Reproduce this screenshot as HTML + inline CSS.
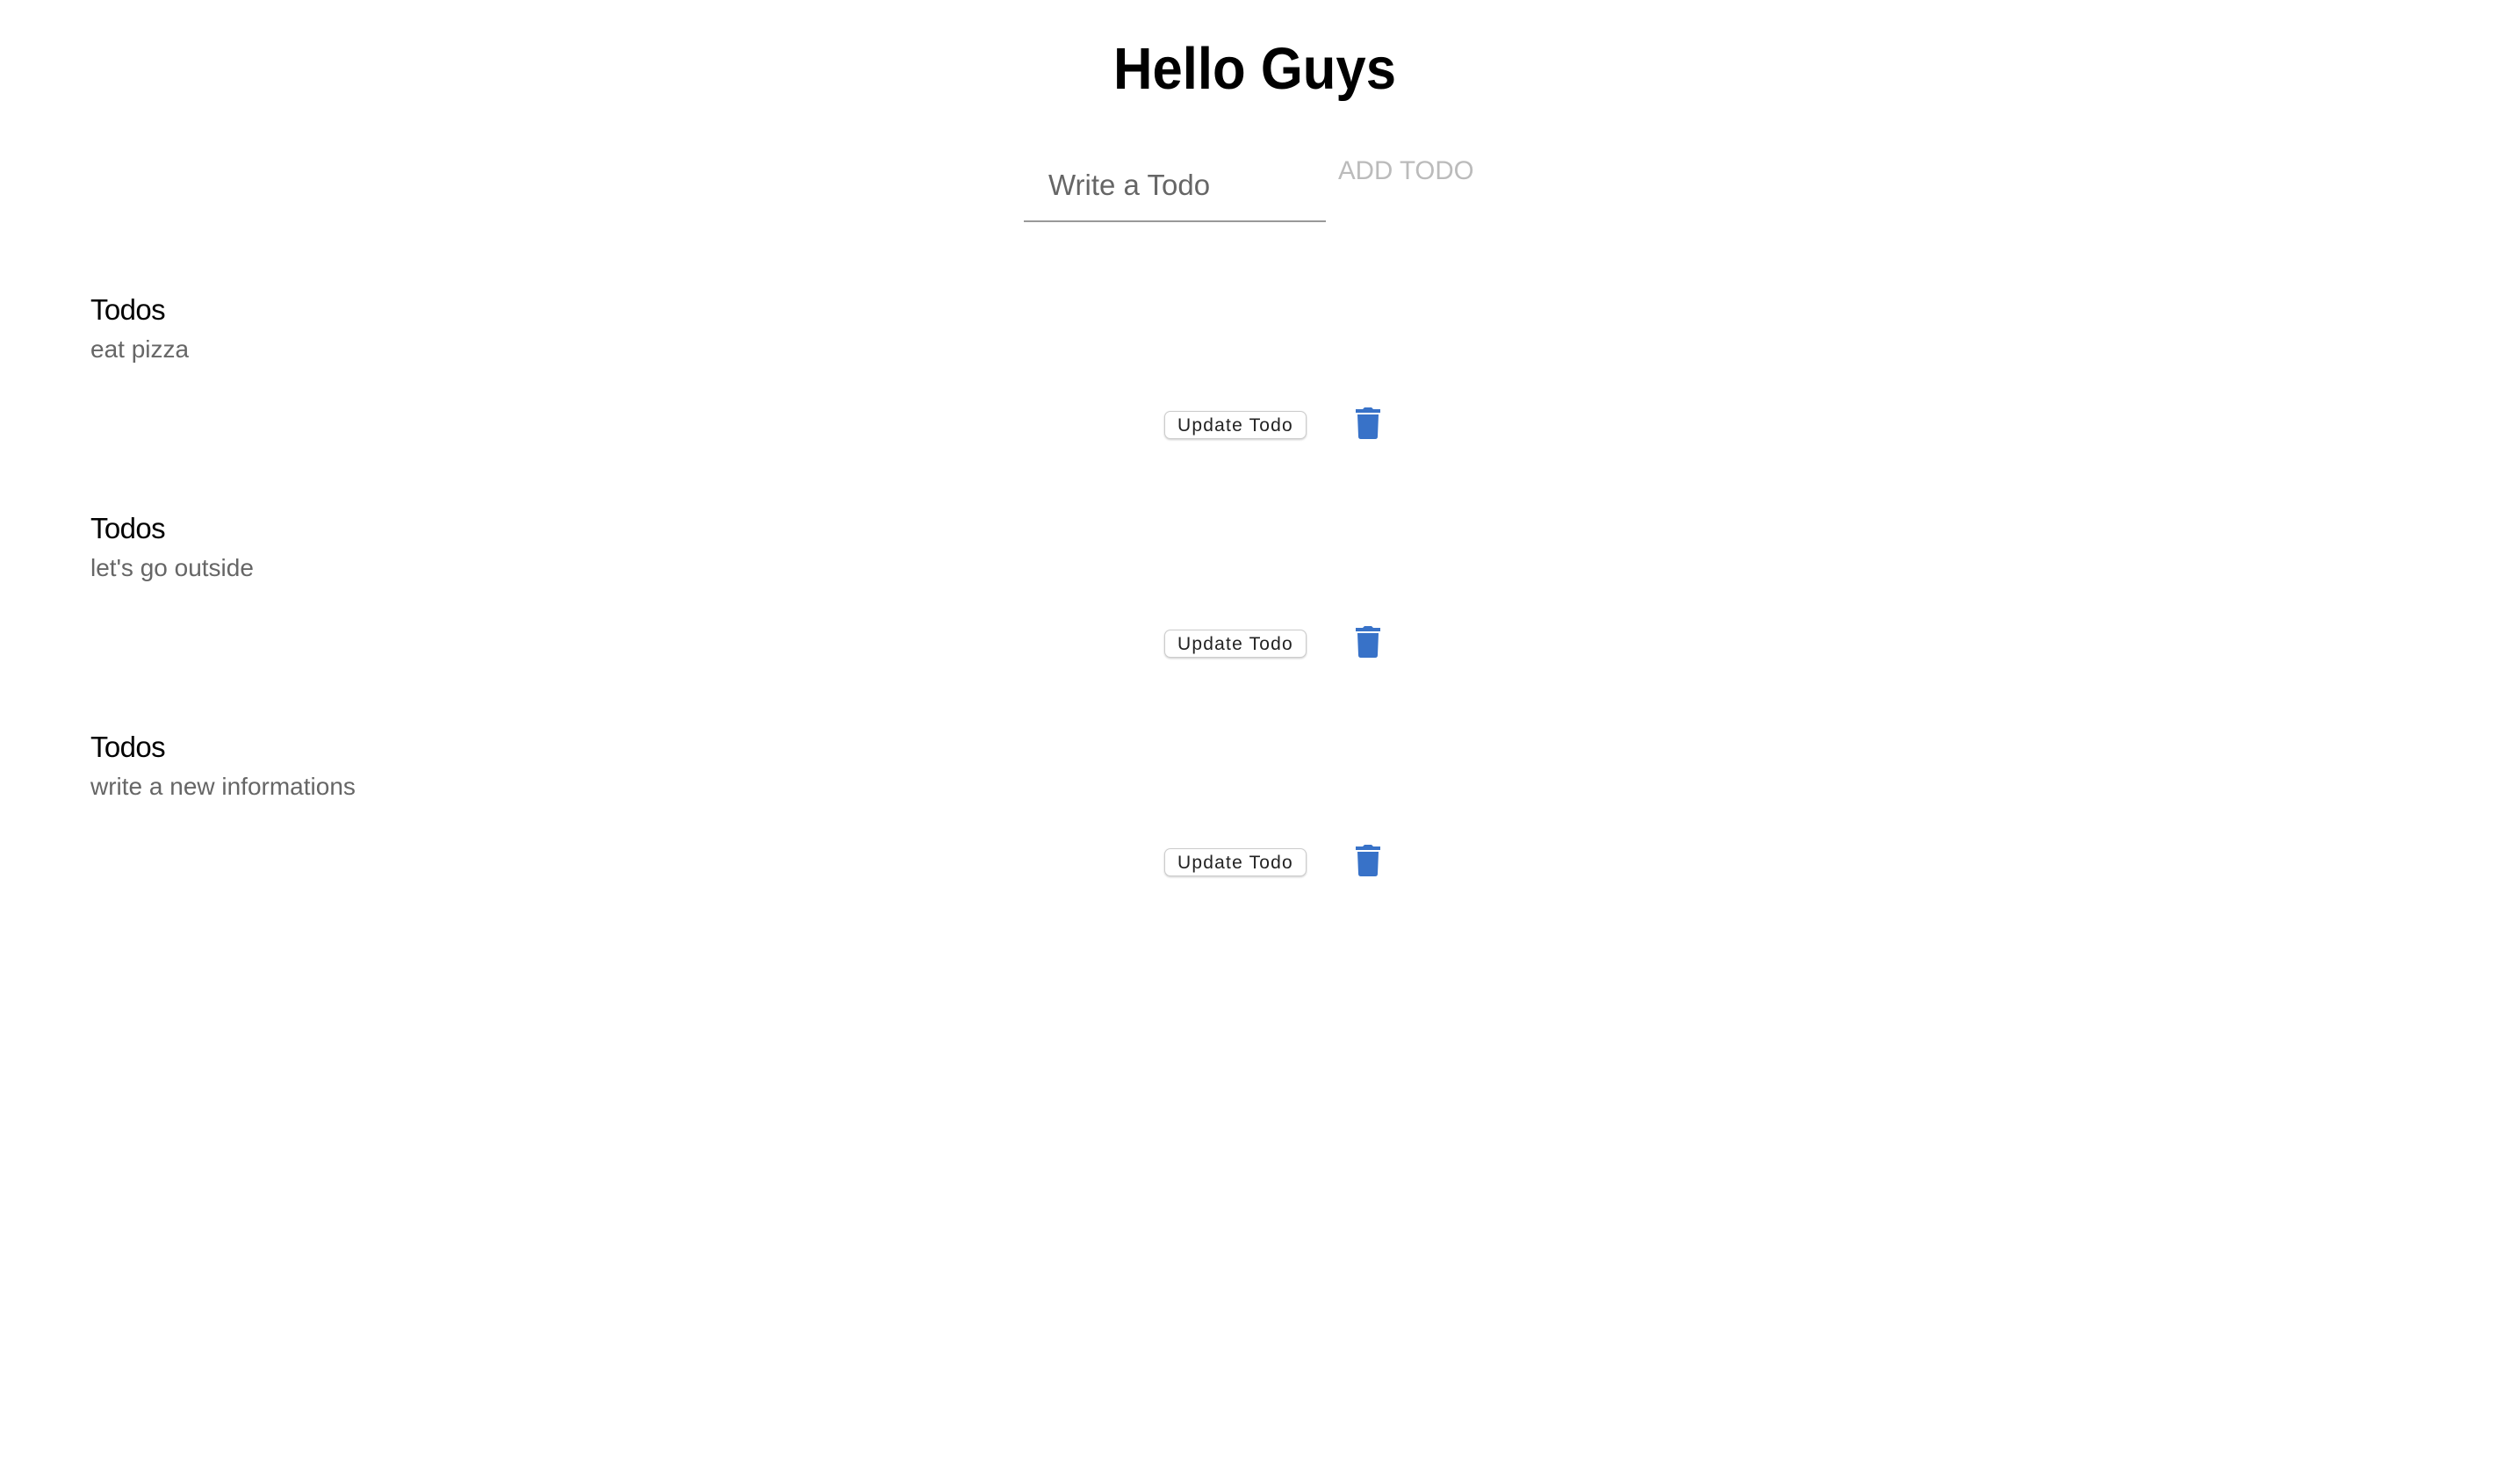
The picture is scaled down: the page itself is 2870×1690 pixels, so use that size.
<!DOCTYPE html>
<html><head><meta charset="utf-8"><style>
html,body{margin:0;padding:0;background:#fff;width:2870px;height:1690px;overflow:hidden;font-family:"Liberation Sans",Arial,sans-serif}
.a{position:absolute;line-height:1;white-space:nowrap}
h1{position:absolute;margin:0;left:1268px;top:45px;font-size:67px;font-weight:bold;line-height:1;transform:scaleX(0.92);transform-origin:left top;color:#000;white-space:nowrap}
.t{font-size:33px;color:#000;left:103px;letter-spacing:-0.6px}
.s{font-size:28px;color:#666;left:103px}
.btn{position:absolute;left:1326px;width:160px;height:30px;border:1px solid #ccc;border-radius:7px;box-shadow:0 1px 2px rgba(0,0,0,.2);background:#fff;font-size:21px;color:#222;letter-spacing:1.2px;text-align:center;line-height:32px}
svg{position:absolute;left:1544px}
</style></head><body>
<h1>Hello Guys</h1>
<div class="a" style="left:1194px;top:194px;font-size:33px;color:#666">Write a Todo</div>
<div style="position:absolute;left:1166px;top:251px;width:344px;height:2px;background:#999"></div>
<div class="a" style="left:1524px;top:180px;font-size:29.5px;color:#bbb">ADD TODO</div>

<div class="a t" style="top:336px">Todos</div>
<div class="a s" style="top:384px">eat pizza</div>
<div class="btn" style="top:468px">Update Todo</div>
<svg style="top:464px" width="28" height="36" viewBox="0 0 28 36"><path d="M10 0h8l2 2h8v4H0V2h8z" fill="#3872c8"/><path d="M2 8h24l-1 25q0 3-3 3H6q-3 0-3-3z" fill="#3872c8"/></svg>

<div class="a t" style="top:585px">Todos</div>
<div class="a s" style="top:633px">let's go outside</div>
<div class="btn" style="top:717px">Update Todo</div>
<svg style="top:713px" width="28" height="36" viewBox="0 0 28 36"><path d="M10 0h8l2 2h8v4H0V2h8z" fill="#3872c8"/><path d="M2 8h24l-1 25q0 3-3 3H6q-3 0-3-3z" fill="#3872c8"/></svg>

<div class="a t" style="top:834px">Todos</div>
<div class="a s" style="top:882px">write a new informations</div>
<div class="btn" style="top:966px">Update Todo</div>
<svg style="top:962px" width="28" height="36" viewBox="0 0 28 36"><path d="M10 0h8l2 2h8v4H0V2h8z" fill="#3872c8"/><path d="M2 8h24l-1 25q0 3-3 3H6q-3 0-3-3z" fill="#3872c8"/></svg>
</body></html>
